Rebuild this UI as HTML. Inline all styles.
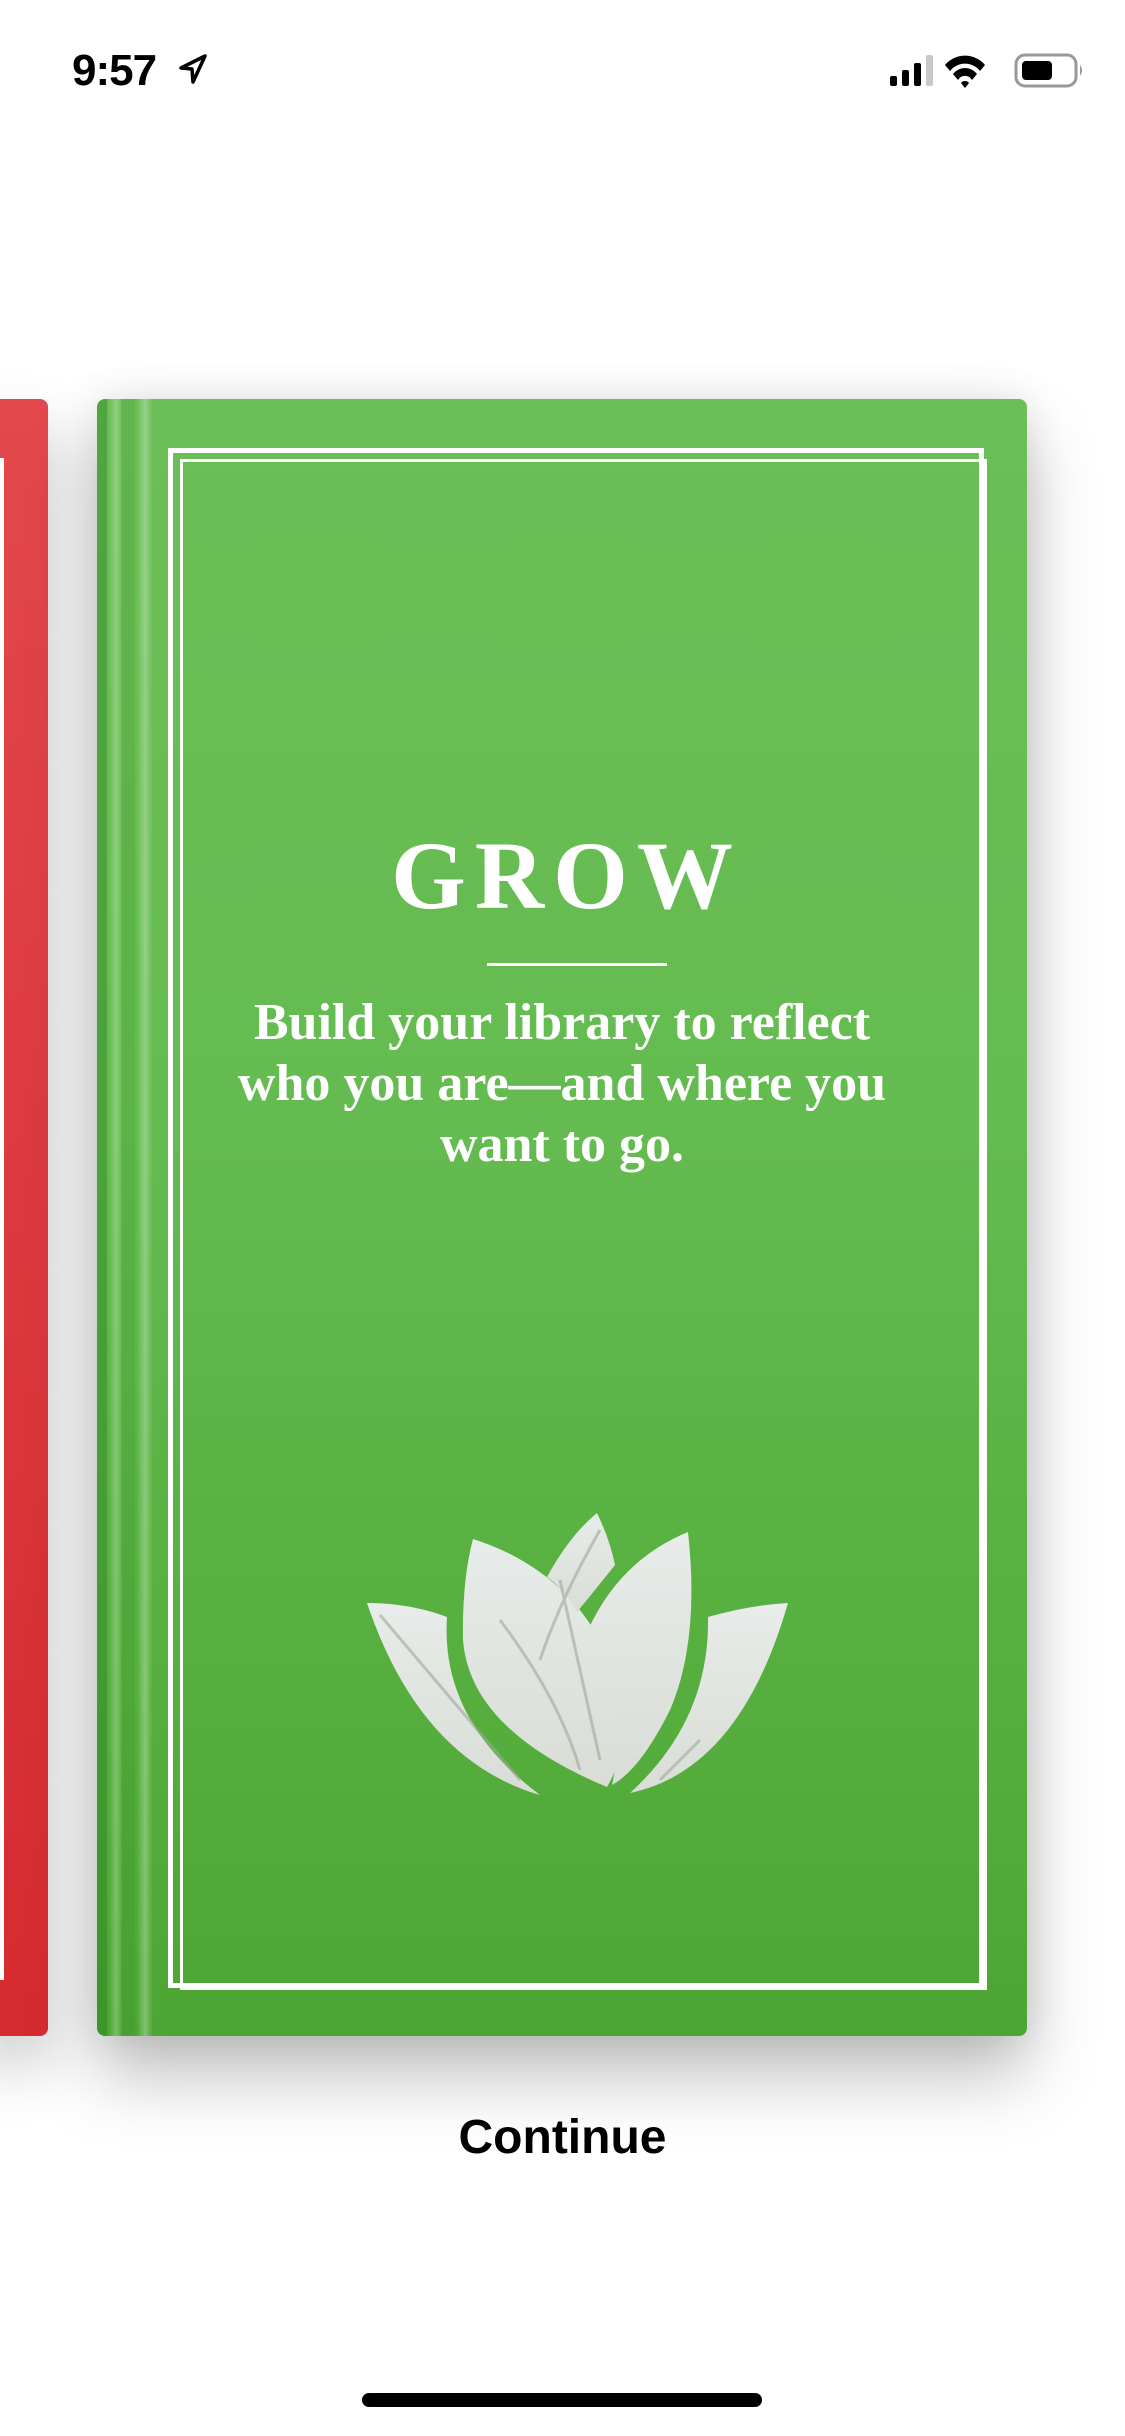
<!DOCTYPE html>
<html><head><meta charset="utf-8"><style>
html,body{margin:0;padding:0;background:#fff;}
body{width:1125px;height:2436px;position:relative;overflow:hidden;font-family:"Liberation Sans",sans-serif;}
.abs{position:absolute;}
</style></head><body>
<!-- status bar -->
<div class="abs" style="left:72px;top:46px;font-size:44px;font-weight:bold;letter-spacing:-1px;color:#000;">9:57</div>
<svg class="abs" style="left:178px;top:53px" width="30" height="32" viewBox="0 0 30 32"><path d="M27 3 L3 15 L14 16 L15 29 Z" fill="none" stroke="#000" stroke-width="3.5" stroke-linejoin="round"/></svg>
<svg class="abs" style="left:885px;top:50px" width="200" height="40" viewBox="0 0 200 40">
<rect x="5" y="26" width="7" height="10" rx="2" fill="#000"/>
<rect x="17" y="20" width="7" height="16" rx="2" fill="#000"/>
<rect x="29" y="13" width="7" height="23" rx="2" fill="#000"/>
<rect x="41" y="5" width="7" height="31" rx="2" fill="#c8c8c8"/>
<path d="M60 15 A26 26 0 0 1 100 15 L95 21 A19 19 0 0 0 65 21 Z" fill="#000"/>
<path d="M68 24 A15 15 0 0 1 92 24 L87 30 A8 8 0 0 0 73 30 Z" fill="#000"/>
<path d="M76 33 L80 38 L84 33 A5 5 0 0 0 76 33Z" fill="#000"/>
<rect x="131" y="5" width="60" height="31" rx="9" fill="none" stroke="#999" stroke-width="3"/>
<rect x="137" y="11" width="30" height="19" rx="4" fill="#000"/>
<path d="M195 15 Q199 20 195 26 Z" fill="#999"/>
</svg>

<!-- red book -->
<div class="abs" style="left:-20px;top:399px;width:68px;height:1637px;border-radius:8px;background:linear-gradient(180deg,#e2484c,#d52b2f);box-shadow:0 30px 60px rgba(0,0,0,0.22);"></div>
<div class="abs" style="left:0px;top:458px;width:4px;height:1522px;background:#fff;"></div>

<!-- green book -->
<div class="abs" style="left:97px;top:399px;width:930px;height:1637px;border-radius:8px;background:linear-gradient(180deg,#6bbf56 0%,#64bb4f 45%,#4da633 100%);overflow:hidden;box-shadow:0 40px 70px rgba(0,0,0,0.25),0 0 40px rgba(0,0,0,0.10);">
  <div class="abs" style="left:0;top:0;width:10px;height:100%;background:rgba(30,120,20,0.35);"></div>
  <div class="abs" style="left:12px;top:0;width:14px;height:100%;background:linear-gradient(90deg,rgba(255,255,255,0),rgba(255,255,255,0.25),rgba(255,255,255,0));"></div>
  <div class="abs" style="left:40px;top:0;width:16px;height:100%;background:linear-gradient(90deg,rgba(255,255,255,0),rgba(255,255,255,0.3),rgba(255,255,255,0));"></div>
  <div class="abs" style="left:24px;top:0;width:14px;height:100%;background:rgba(40,130,30,0.15);"></div>
</div>
<div class="abs" style="left:168px;top:448px;width:806px;height:1530px;border:5px solid #fff;"></div>
<div class="abs" style="left:180px;top:459px;width:801px;height:1525px;border:3px solid #fff;"></div>

<div class="abs" style="left:97px;top:820px;width:930px;text-align:center;font-family:'Liberation Serif',serif;font-weight:bold;font-size:96px;letter-spacing:9px;color:#fff;padding-left:9px;box-sizing:border-box;">GROW</div>
<div class="abs" style="left:487px;top:963px;width:180px;height:3px;background:#fff;"></div>
<div class="abs" style="left:60px;top:992px;width:1004px;text-align:center;font-family:'Liberation Serif',serif;font-weight:bold;font-size:52px;line-height:61px;color:#fff;">Build your library to reflect<br>who you are—and where you<br>want to go.</div>

<!-- lotus -->
<svg class="abs" style="left:0;top:0" width="1125" height="2436" viewBox="0 0 1125 2436">
<defs><linearGradient id="pg" x1="0" y1="0" x2="0" y2="1"><stop offset="0" stop-color="#e8ecea"/><stop offset="1" stop-color="#d9ddd6"/></linearGradient></defs>
<g fill="url(#pg)">
<path d="M367 1603 Q410 1603 447 1617 Q440 1720 540 1795 Q420 1760 367 1603Z"/>
<path d="M473 1539 Q570 1570 610 1660 Q640 1730 607 1787 Q470 1730 463 1640 Q462 1580 473 1539Z"/>
<path d="M597 1513 Q610 1540 615 1565 Q595 1590 577 1612 Q565 1590 547 1577 Q570 1535 597 1513Z"/>
<path d="M688 1532 Q700 1640 670 1710 Q640 1770 612 1785 Q630 1700 588 1630 Q620 1560 688 1532Z"/>
<path d="M788 1603 Q750 1605 708 1617 Q710 1720 630 1793 Q740 1770 788 1603Z"/>
</g>
<g stroke="#a0a898" stroke-width="3" fill="none" opacity="0.6">
<path d="M380 1615 L520 1780"/><path d="M560 1580 L600 1760"/><path d="M500 1620 Q560 1700 580 1770"/><path d="M600 1530 Q560 1600 540 1660"/><path d="M700 1740 Q680 1760 660 1780"/>
</g>
</svg>

<div class="abs" style="left:0;top:2110px;width:1125px;text-align:center;font-size:48px;font-weight:bold;color:#000;">Continue</div>
<div class="abs" style="left:362px;top:2393px;width:400px;height:14px;border-radius:7px;background:#000;"></div>
</body></html>
